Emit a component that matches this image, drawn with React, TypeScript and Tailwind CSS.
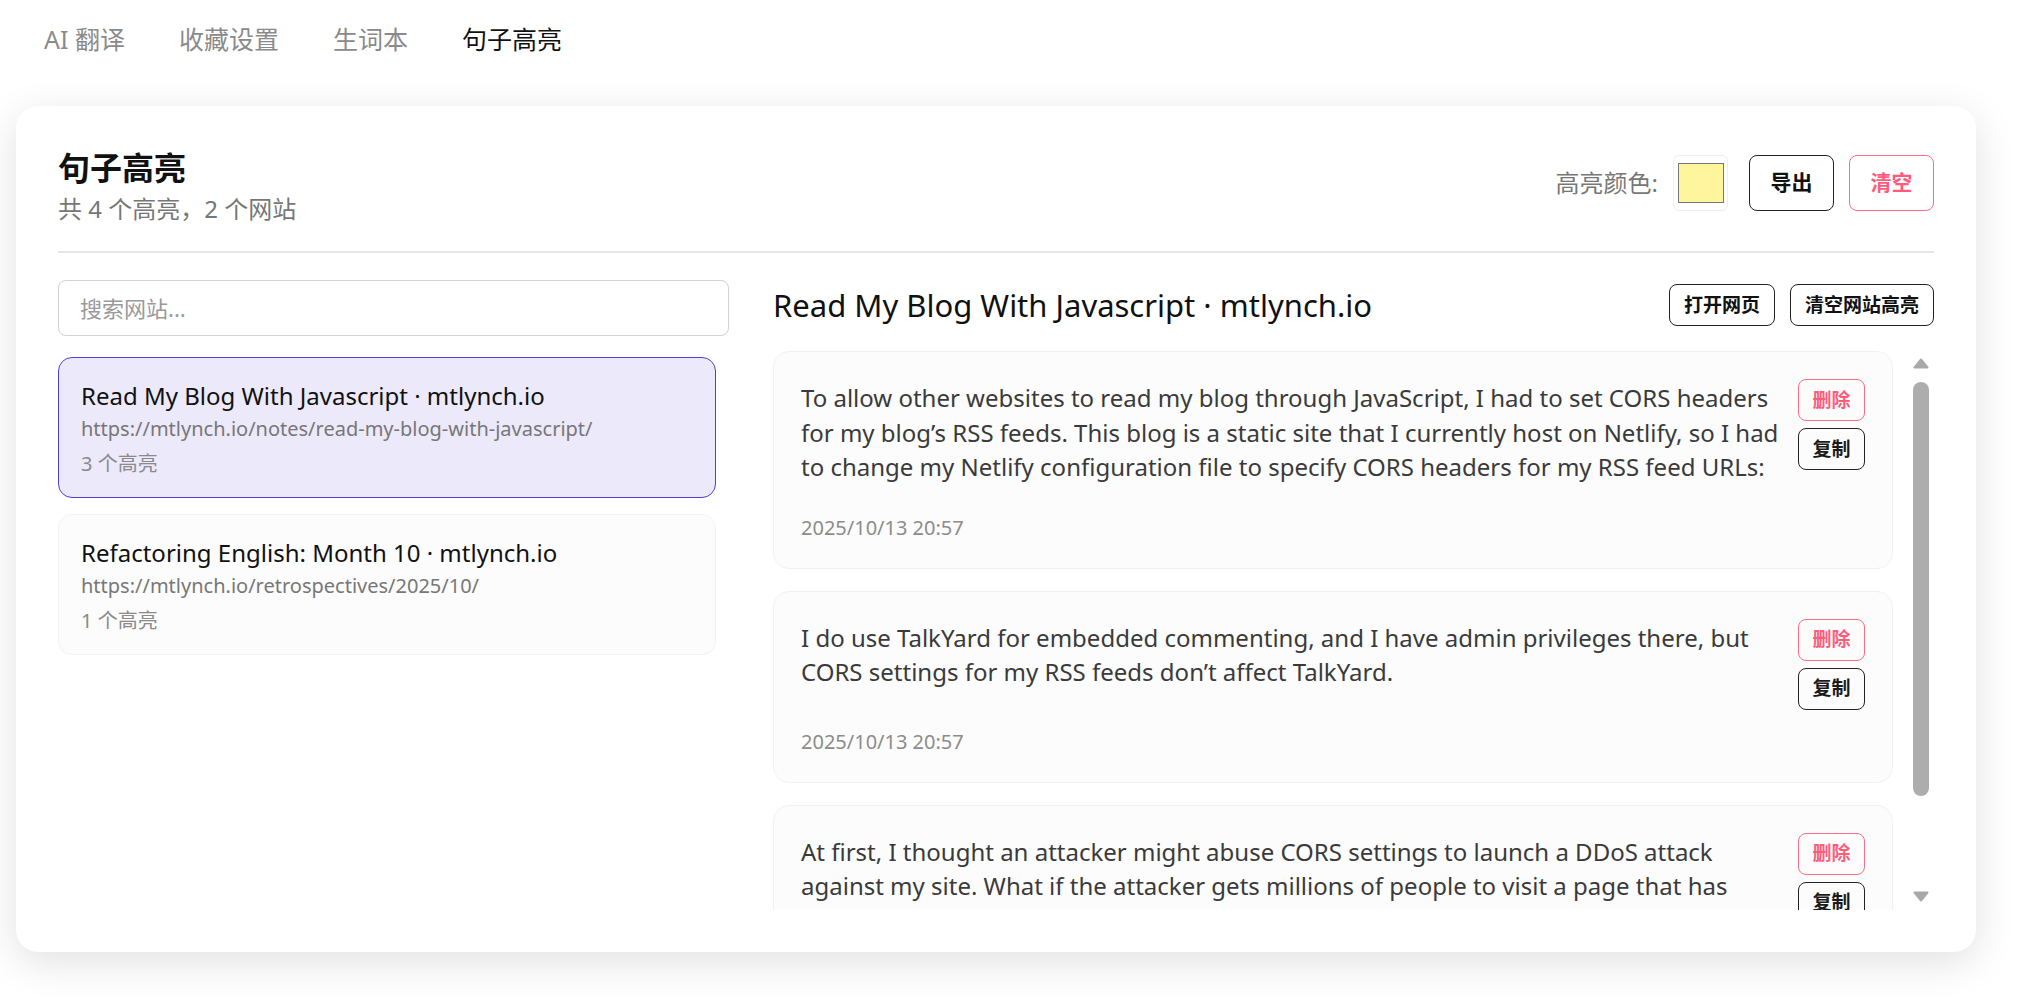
import React from "react";

const tabs = ["AI 翻译", "收藏设置", "生词本", "句子高亮"];

const sites = [
  {
    title: "Read My Blog With Javascript · mtlynch.io",
    url: "https://mtlynch.io/notes/read-my-blog-with-javascript/",
    count: 3,
    active: true,
  },
  {
    title: "Refactoring English: Month 10 · mtlynch.io",
    url: "https://mtlynch.io/retrospectives/2025/10/",
    count: 1,
    active: false,
  },
];

const highlights = [
  {
    text: "To allow other websites to read my blog through JavaScript, I had to set CORS headers for my blog’s RSS feeds. This blog is a static site that I currently host on Netlify, so I had to change my Netlify configuration file to specify CORS headers for my RSS feed URLs:",
    time: "2025/10/13 20:57",
  },
  {
    text: "I do use TalkYard for embedded commenting, and I have admin privileges there, but CORS settings for my RSS feeds don’t affect TalkYard.",
    time: "2025/10/13 20:57",
  },
  {
    text: "At first, I thought an attacker might abuse CORS settings to launch a DDoS attack against my site. What if the attacker gets millions of people to visit a page that has JavaScript that fetches my RSS feed over and over again in the background?",
    time: "2025/10/13 20:57",
  },
];

function Arrow({ down }: { down?: boolean }) {
  return (
    <svg width="16" height="11" viewBox="0 0 16 11" className="block">
      <path
        d={down ? "M1.5 1.5 H14.5 L8 9.5 Z" : "M1.5 9.5 H14.5 L8 1.5 Z"}
        fill="#a9a9a9"
        stroke="#a9a9a9"
        strokeWidth="2"
        strokeLinejoin="round"
      />
    </svg>
  );
}

function SiteItem({ site }: { site: (typeof sites)[number] }) {
  return (
    <div
      className={
        site.active
          ? "rounded-[14px] border border-[#4f3fd8] bg-[#ece9fb] px-[22px] pt-[22px] pb-[20px]"
          : "rounded-[14px] border border-[#f2f2f2] bg-[#fcfcfc] px-[22px] pt-[22px] pb-[20px]"
      }
    >
      <div className="text-[24px] leading-[32px] text-[#111]">{site.title}</div>
      <div className="mt-[4px] text-[20px] leading-[26px] text-[#777]">{site.url}</div>
      <div className="mt-[9px] text-[20px] leading-[26px] text-[#8a8a8a]">{site.count} 个高亮</div>
    </div>
  );
}

function HighlightCard({ item }: { item: (typeof highlights)[number] }) {
  return (
    <div className="shrink-0 rounded-[16px] border border-[#f1f1f1] bg-[#fcfcfc] p-[27px]">
      <div className="flex items-start gap-[16px]">
        <p className="flex-1 pt-[2px] pb-[11px] text-[24px] leading-[34.5px] text-[#3a3a3a]">{item.text}</p>
        <div className="flex w-[67px] shrink-0 flex-col gap-[7px]">
          <button className="h-[42px] rounded-[8px] border border-[#ff6b84] text-[19px] font-bold text-[#ff5c7c]">
            删除
          </button>
          <button className="h-[42px] rounded-[8px] border border-[#222] text-[19px] font-bold text-[#1a1a1a]">
            复制
          </button>
        </div>
      </div>
      <div className="mt-[18px] text-[20px] leading-[27px] text-[#8c8c8c]">{item.time}</div>
    </div>
  );
}

export default function App() {
  return (
    <div className="min-h-[1001px] bg-white [font-family:'Noto_Sans','Noto_Sans_CJK_SC',sans-serif]">
      <nav className="flex h-[78px] items-center pl-[17px]">
        {tabs.map((t, i) => (
          <div
            key={t}
            className={
              i === 3
                ? "px-[27px] text-[25px] leading-[34px] text-[#111]"
                : "px-[27px] text-[25px] leading-[34px] text-[#8a8a8a]"
            }
          >
            {t}
          </div>
        ))}
      </nav>

      <div className="mt-[28px] ml-[16px] w-[1960px] rounded-[22px] bg-white px-[42px] pt-[40px] pb-[42px] shadow-[0_10px_40px_rgba(0,0,0,0.12)]">
        <div className="flex items-start justify-between border-b-2 border-[#e6e6e6] pb-[24px]">
          <div>
            <div className="text-[32px] leading-[44px] font-bold text-[#111]">句子高亮</div>
            <div className="text-[24px] leading-[37px] text-[#777]">共 4 个高亮，2 个网站</div>
          </div>
          <div className="mt-[9px] flex items-center">
            <span className="text-[24px] text-[#777]">高亮颜色:</span>
            <div className="ml-[15px] flex h-[56px] w-[55px] items-center justify-center rounded-[6px] border border-[#eeeeee]">
              <div className="h-[40px] w-[46px] border border-[#767676] bg-[#fff59d]" />
            </div>
            <button className="ml-[21px] h-[56px] w-[85px] rounded-[8px] border border-[#222] text-[21px] font-bold text-[#111]">
              导出
            </button>
            <button className="ml-[15px] h-[56px] w-[85px] rounded-[8px] border border-[#ff6b84] text-[21px] font-bold text-[#ff5c7c]">
              清空
            </button>
          </div>
        </div>

        <div className="mt-[27px] flex h-[630px] gap-[44px]">
          <div className="w-[671px] shrink-0">
            <div className="flex h-[56px] items-center rounded-[8px] border border-[#d2d2d2] px-[21px] text-[22px] text-[#9a9a9a]">
              搜索网站...
            </div>
            <div className="mt-[21px] flex flex-col gap-[16px] pr-[13px]">
              {sites.map((s) => (
                <SiteItem key={s.url} site={s} />
              ))}
            </div>
          </div>

          <div className="flex min-w-0 flex-1 flex-col">
            <div className="flex h-[50px] items-center justify-between">
              <div className="text-[31px] leading-[42px] text-[#111]">Read My Blog With Javascript · mtlynch.io</div>
              <div className="flex gap-[15px]">
                <button className="h-[42px] rounded-[8px] border border-[#222] px-[14px] text-[19px] font-bold text-[#111]">
                  打开网页
                </button>
                <button className="h-[42px] rounded-[8px] border border-[#222] px-[14px] text-[19px] font-bold text-[#111]">
                  清空网站高亮
                </button>
              </div>
            </div>

            <div className="mt-[21px] flex h-[559px] pr-[5px]">
              <div className="flex flex-1 flex-col gap-[22px] overflow-hidden">
                {highlights.map((h, i) => (
                  <HighlightCard key={i} item={h} />
                ))}
              </div>
              <div className="ml-[20px] flex w-[16px] flex-col items-center pt-[7px] pb-[8px]">
                <Arrow />
                <div className="mt-[13px] h-[414px] w-[16px] rounded-full bg-[#adadad]" />
                <div className="flex-1" />
                <Arrow down />
              </div>
            </div>
          </div>
        </div>
      </div>
    </div>
  );
}
